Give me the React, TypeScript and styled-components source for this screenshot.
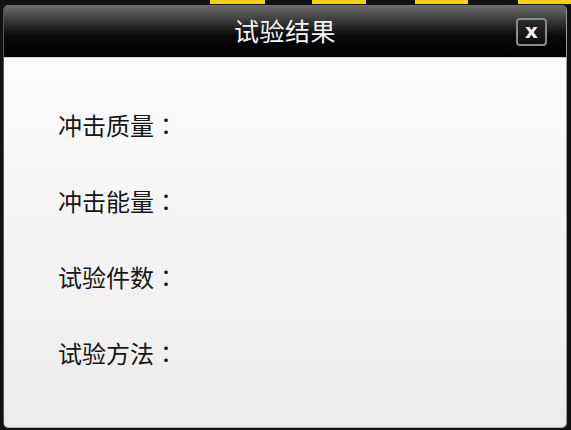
import React from "react";
import styled, { createGlobalStyle } from "styled-components";

const GlobalStyle = createGlobalStyle`
  html, body {
    margin: 0;
    padding: 0;
  }
  body {
    width: 571px;
    height: 430px;
    overflow: hidden;
    background-color: #111;
    background-image: linear-gradient(
      to right,
      transparent 0 210px,
      #f5d400 210px 265px,
      transparent 265px 312px,
      #f5d400 312px 366px,
      transparent 366px 415px,
      #f5d400 415px 468px,
      transparent 468px 518px,
      #f5d400 518px 571px
    );
    background-size: 571px 4px;
    background-repeat: no-repeat;
    font-family: "Noto Sans CJK SC", "Noto Sans", sans-serif;
  }
`;

const labels = ["冲击质量", "冲击能量", "试验件数", "试验方法"];

const App: React.FC = () => {
    return (
        <>
            <GlobalStyle/>
            <Dialog>
                <Header>
                    <Title>试验结果</Title>
                    <CloseButton aria-label="关闭">x</CloseButton>
                </Header>
                <Body>
                    {labels.map(label => (
                        <Row key={label}>
                            <Label>{label}<Colon>：</Colon></Label>
                        </Row>
                    ))}
                </Body>
            </Dialog>
        </>
    )
}

export default App

const Dialog = styled.div`
  box-sizing: border-box;
  width: 564px;
  height: 423px;
  margin: 5px 0 0 3px;
  display: flex;
  flex-direction: column;
  border-radius: 5px;
  overflow: hidden;
  border-left: 1px solid #555;
  border-right: 1px solid #9a9a9a;
  border-bottom: 1px solid #b0b0b0;
`

const Header = styled.div`
  position: relative;
  height: 52px;
  flex-shrink: 0;
  display: flex;
  align-items: center;
  justify-content: center;
  background: linear-gradient(to bottom, #6e6e6e 0%, #3a3a3a 30%, #0a0a0a 58%, #000 100%);
  border-bottom: 1px solid #cfcfcf;
`

const Title = styled.h1`
  margin: 0;
  color: #f4f4f4;
  font-size: 25px;
  font-weight: 400;
  letter-spacing: 0.5px;
  line-height: 1;
  padding-bottom: 2px;
`

const CloseButton = styled.button`
  position: absolute;
  right: 19px;
  top: 13px;
  width: 31px;
  height: 28px;
  padding: 0;
  box-sizing: border-box;
  border: 2px solid #8a8a8a;
  border-radius: 4px;
  background: linear-gradient(to bottom, #2a2a2a, #0c0c0c);
  color: #f2f2f2;
  font-family: "DejaVu Sans", sans-serif;
  font-size: 20px;
  font-weight: 700;
  line-height: 1;
  display: flex;
  align-items: center;
  justify-content: center;
  padding-bottom: 3px;
`

const Body = styled.div`
  flex: 1;
  display: flex;
  flex-direction: column;
  padding: 29px 0 0 54px;
  background: linear-gradient(to bottom, #fcfbfc 0%, #f4f3f4 55%, #edecec 100%);
`

const Row = styled.div`
  height: 76px;
  display: flex;
  align-items: center;
`

const Label = styled.span`
  color: #151515;
  font-size: 24px;
  line-height: 1;
`

const Colon = styled.span`
  font-family: "Noto Sans CJK TC", "Noto Sans CJK SC", sans-serif;
`
